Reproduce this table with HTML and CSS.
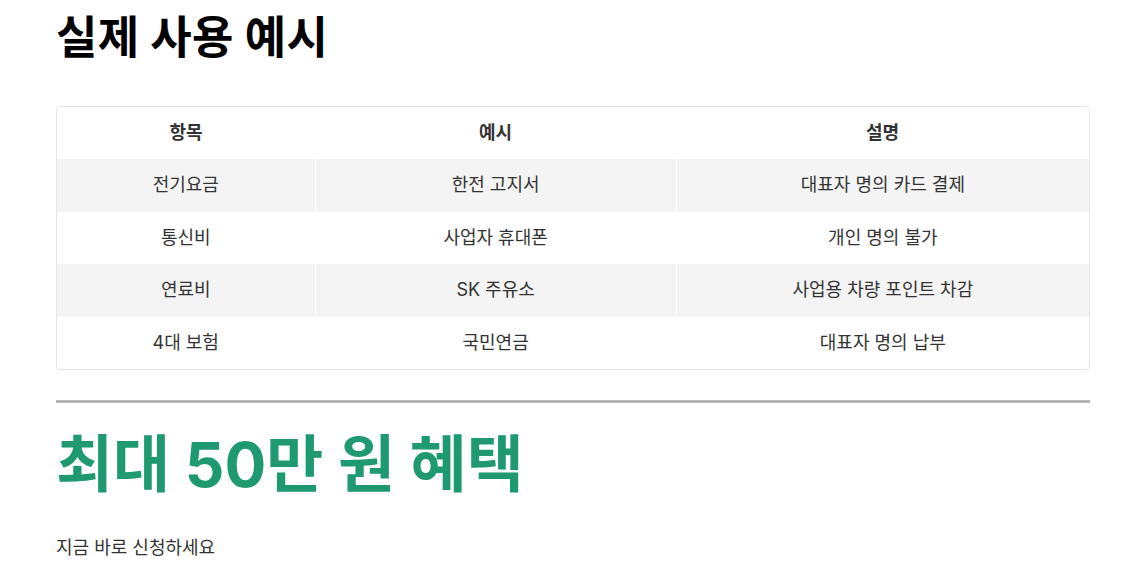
FILE: index.html
```html
<!DOCTYPE html>
<html lang="ko">
<head>
<meta charset="utf-8">
<title>실제 사용 예시</title>
<link rel="stylesheet" href="styles.css">
</head>
<body>
<main class="page">
  <h1 class="title">실제 사용 예시</h1>
  <div class="table-wrap">
    <table class="examples">
      <colgroup>
        <col class="c1"><col class="c2"><col class="c3">
      </colgroup>
      <thead>
        <tr><th>항목</th><th>예시</th><th>설명</th></tr>
      </thead>
      <tbody>
        <tr><td>전기요금</td><td>한전 고지서</td><td>대표자 명의 카드 결제</td></tr>
        <tr><td>통신비</td><td>사업자 휴대폰</td><td>개인 명의 불가</td></tr>
        <tr><td>연료비</td><td>SK 주유소</td><td>사업용 차량 포인트 차감</td></tr>
        <tr><td>4대 보험</td><td>국민연금</td><td>대표자 명의 납부</td></tr>
      </tbody>
    </table>
  </div>
  <hr class="divider">
  <h2 class="promo">최대 50만 원 혜택</h2>
  <p class="cta">지금 바로 신청하세요</p>
</main>
</body>
</html>
```
FILE: styles.css
```css
* { box-sizing: border-box; }
html, body { margin: 0; padding: 0; background: #fff; }
body {
  font-family: Inter, "Noto Sans CJK KR", sans-serif;
  color: #333;
}
.page {
  padding: 0 57px 0 56px;
}
.title {
  font-size: 45px;
  font-weight: 700;
  letter-spacing: 0.3px;
  color: #000;
  line-height: 1.2;
  margin: 0;
  padding-top: 11px;
  padding-bottom: 41px;
}
.table-wrap {
  border: 1px solid #e6e6e6;
  border-radius: 4px;
  overflow: hidden;
}
.examples {
  width: 100%;
  border-collapse: collapse;
  table-layout: fixed;
  font-size: 18px;
  line-height: 24.5px;
}
.c1 { width: 25%; }
.c2 { width: 35%; }
.c3 { width: 40%; }
.examples th,
.examples td {
  text-align: center;
  padding: 14px 8px;
  color: #333;
}
.examples th { font-weight: 700; line-height: 24px; padding-top: 14px; padding-bottom: 14px; }
.examples td { border-left: 1px solid #fff; }
.examples td:first-child { border-left: 0; }
.examples tbody tr:nth-child(odd) td { background: #f4f4f4; }
.divider {
  border: 0;
  height: 3px;
  margin: 30px 0 0;
  background: linear-gradient(#c8c8c8, #a9a9a9 50%, #c8c8c8);
}
.promo {
  font-size: 62px;
  font-weight: 700;
  color: #1f9a6f;
  line-height: 1.2;
  margin: 25px 0 0;
}
.cta {
  font-size: 18px;
  line-height: 26px;
  color: #333;
  margin: 33px 0 0;
}
```
